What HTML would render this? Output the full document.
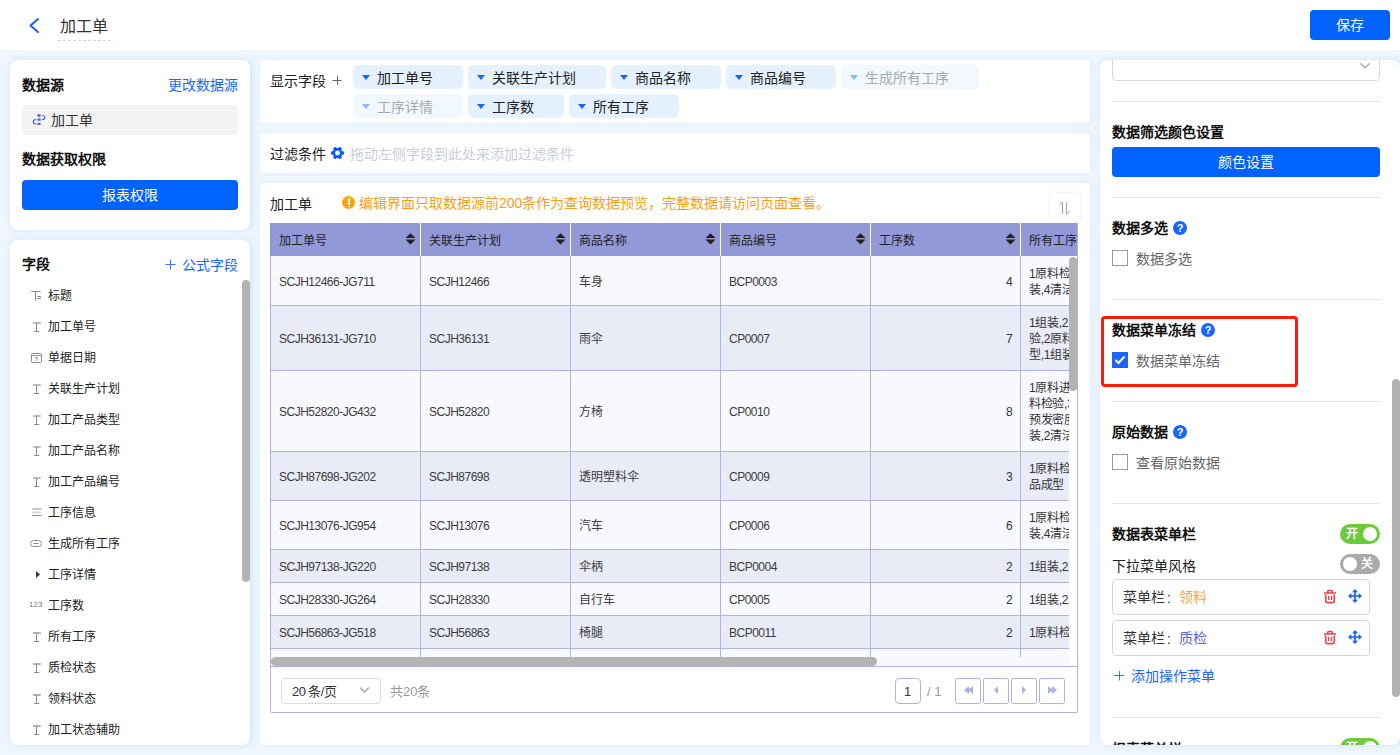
<!DOCTYPE html>
<html lang="zh-CN"><head><meta charset="utf-8">
<style>
*{box-sizing:border-box;margin:0;padding:0}
html,body{width:1400px;height:755px;overflow:hidden}
body{font-family:"Liberation Sans",sans-serif;background:#eff6fe;color:#333;position:relative;font-size:14px}
.abs{position:absolute}
.hdr{position:absolute;left:0;top:0;width:1400px;height:50px;background:#fff}
.card{position:absolute;background:#fff;border-radius:8px;box-shadow:1.5px 0 7px rgba(20,140,255,.15)}
.card.m{border-radius:4px;box-shadow:1px 0 6px rgba(20,140,255,.09)}
.t{position:absolute;white-space:nowrap;line-height:1}
.b{font-weight:bold;color:#111;margin-top:-1px}
.blue{color:#1a66ff}
.btn{position:absolute;background:#0062ff;color:#fff;border-radius:4px;text-align:center;font-size:14px}
.chip{position:absolute;height:24px;border-radius:5px;background:#e5f1fe;font-size:14px;color:#222}
.chip i{position:absolute;left:9px;top:10px;width:0;height:0;border-left:4.5px solid transparent;border-right:4.5px solid transparent;border-top:5px solid #1763ff}
.chip span{position:absolute;left:24px;top:6px;line-height:1}
.chip.dis{background:#f1f8fe;color:#a9a9a9}
.chip.dis i{border-top-color:#8cb6fa}
.fi{position:absolute;left:0;height:14px;width:200px}
.fi span{position:absolute;left:38px;top:1px;font-size:12px;line-height:1;color:#222}
.fi svg{position:absolute}
.dv{position:absolute;left:12px;width:268px;height:1px;background:#e6e6e6}
.cb{position:absolute;left:12px;width:16px;height:16px;border:1px solid #9397b4;border-radius:0;background:#fff}
.cb.on{background:#1f63ff;border-color:#1f63ff}
.help{position:absolute;width:14px;height:14px;border-radius:50%;background:#1667ff;color:#fff;font-size:11px;font-weight:bold;text-align:center;line-height:14px}
.gray{color:#666}
</style></head><body>
<!-- header -->
<div class="hdr">
  <svg class="abs" style="left:27px;top:16px" width="15" height="19" viewBox="0 0 15 19"><path d="M11 3 L3.5 9.5 L11 16" fill="none" stroke="#1b5cff" stroke-width="2" stroke-linecap="round" stroke-linejoin="round"/></svg>
  <div class="t" style="left:60px;top:19px;font-size:16px;color:#333">加工单</div>
  <div class="abs" style="left:58px;top:40px;width:56px;height:1px;background-image:linear-gradient(90deg,#d4d4d4 3px,transparent 3px);background-size:5px 1px"></div>
  <div class="btn" style="left:1310px;top:10px;width:80px;height:30px;line-height:30px">保存</div>
</div>

<!-- left cards -->
<div class="card" style="left:10px;top:60px;width:240px;height:170px">
  <div class="t b" style="left:12px;top:19px;font-size:14px">数据源</div>
  <div class="t blue" style="left:158px;top:18px;font-size:14px">更改数据源</div>
  <div class="abs" style="left:12px;top:45px;width:216px;height:30px;background:#f4f4f5;border-radius:3px"></div>
  <svg class="abs" style="left:22px;top:53px" width="14" height="14" viewBox="0 0 14 14"><g fill="none" stroke="#4f5ff2" stroke-width="1.2" stroke-linecap="round"><path d="M5.4 2.5H8.6M5.4 6.6H8.6M5.4 10.9H8.6" stroke-width="2.3" stroke-linecap="butt"/><path d="M10.3 2.5Q12.8 2.5 12.8 4.55Q12.8 6.6 10.3 6.6"/><path d="M3.7 6.6Q1.2 6.6 1.2 8.75Q1.2 10.9 3.7 10.9"/></g></svg>
  <div class="t" style="left:41px;top:53px;font-size:14px;color:#333">加工单</div>
  <div class="t b" style="left:12px;top:93px;font-size:14px">数据获取权限</div>
  <div class="btn" style="left:12px;top:120px;width:216px;height:30px;line-height:30px">报表权限</div>
</div>
<div class="card" style="left:10px;top:240px;width:240px;height:505px;overflow:hidden">
  <div class="t b" style="left:12px;top:18px;font-size:14px">字段</div>
  <svg class="abs" style="left:155px;top:19px" width="11" height="11" viewBox="0 0 11 11"><path d="M5.5 0.5V10.5M0.5 5.5H10.5" stroke="#3a74ff" stroke-width="1.1" fill="none"/></svg><div class="t blue" style="left:172px;top:18px;font-size:14px">公式字段</div>
  <div class="fi" style="top:49px"><svg style="left:21px;top:1px" width="12" height="12" viewBox="0 0 12 12"><path d="M0.2 1.5H9.7M4.5 1.5V10.7" stroke="#8a8a8a" stroke-width="1" fill="none"/><path d="M6.3 6.5H10M6.3 8.5H10" stroke="#777" stroke-width="0.9" fill="none"/></svg><span>标题</span></div>
<div class="fi" style="top:80px"><svg style="left:23px;top:1px" width="9" height="12" viewBox="0 0 9 12"><path d="M0 2H7.8" stroke="#9a9a9a" stroke-width="1.3" fill="none"/><path d="M3.5 2V10.5M1 10.5H6.2" stroke="#8a8a8a" stroke-width="1" fill="none"/></svg><span>加工单号</span></div>
<div class="fi" style="top:111px"><svg style="left:21px;top:1px" width="12" height="11" viewBox="0 0 12 11"><rect x="0.5" y="1.5" width="10" height="9" rx="1" stroke="#8a8a8a" fill="none"/><path d="M0.5 3.5H10.5M4 5.5H6.5L5 9" stroke="#8a8a8a" stroke-width="0.9" fill="none"/></svg><span>单据日期</span></div>
<div class="fi" style="top:142px"><svg style="left:23px;top:1px" width="9" height="12" viewBox="0 0 9 12"><path d="M0 2H7.8" stroke="#9a9a9a" stroke-width="1.3" fill="none"/><path d="M3.5 2V10.5M1 10.5H6.2" stroke="#8a8a8a" stroke-width="1" fill="none"/></svg><span>关联生产计划</span></div>
<div class="fi" style="top:173px"><svg style="left:23px;top:1px" width="9" height="12" viewBox="0 0 9 12"><path d="M0 2H7.8" stroke="#9a9a9a" stroke-width="1.3" fill="none"/><path d="M3.5 2V10.5M1 10.5H6.2" stroke="#8a8a8a" stroke-width="1" fill="none"/></svg><span>加工产品类型</span></div>
<div class="fi" style="top:204px"><svg style="left:23px;top:1px" width="9" height="12" viewBox="0 0 9 12"><path d="M0 2H7.8" stroke="#9a9a9a" stroke-width="1.3" fill="none"/><path d="M3.5 2V10.5M1 10.5H6.2" stroke="#8a8a8a" stroke-width="1" fill="none"/></svg><span>加工产品名称</span></div>
<div class="fi" style="top:235px"><svg style="left:23px;top:1px" width="9" height="12" viewBox="0 0 9 12"><path d="M0 2H7.8" stroke="#9a9a9a" stroke-width="1.3" fill="none"/><path d="M3.5 2V10.5M1 10.5H6.2" stroke="#8a8a8a" stroke-width="1" fill="none"/></svg><span>加工产品编号</span></div>
<div class="fi" style="top:266px"><svg style="left:21px;top:1px" width="12" height="11" viewBox="0 0 12 11"><path d="M1.5 2H10.5M1.5 8.5H10.5" stroke="#8a8a8a" stroke-width="1" fill="none"/><path d="M1.5 5.2H10.5" stroke="#999" stroke-width="0.9" stroke-dasharray="2 1" fill="none"/></svg><span>工序信息</span></div>
<div class="fi" style="top:297px"><svg style="left:20px;top:1px" width="13" height="11" viewBox="0 0 13 11"><rect x="0.5" y="2.5" width="11" height="6" rx="3" stroke="#8a8a8a" fill="none"/><path d="M3.5 5.5H8.5" stroke="#8a8a8a" fill="none"/></svg><span>生成所有工序</span></div>
<div class="fi" style="top:328px"><svg style="left:24px;top:1px" width="8" height="11" viewBox="0 0 8 11"><path d="M2 2L6 5.5L2 9Z" fill="#333"/></svg><span>工序详情</span></div>
<div class="fi" style="top:359px"><div style="position:absolute;left:19px;top:2px;font-size:8px;line-height:1;color:#777;letter-spacing:0">123</div><span>工序数</span></div>
<div class="fi" style="top:390px"><svg style="left:23px;top:1px" width="9" height="12" viewBox="0 0 9 12"><path d="M0 2H7.8" stroke="#9a9a9a" stroke-width="1.3" fill="none"/><path d="M3.5 2V10.5M1 10.5H6.2" stroke="#8a8a8a" stroke-width="1" fill="none"/></svg><span>所有工序</span></div>
<div class="fi" style="top:421px"><svg style="left:23px;top:1px" width="9" height="12" viewBox="0 0 9 12"><path d="M0 2H7.8" stroke="#9a9a9a" stroke-width="1.3" fill="none"/><path d="M3.5 2V10.5M1 10.5H6.2" stroke="#8a8a8a" stroke-width="1" fill="none"/></svg><span>质检状态</span></div>
<div class="fi" style="top:452px"><svg style="left:23px;top:1px" width="9" height="12" viewBox="0 0 9 12"><path d="M0 2H7.8" stroke="#9a9a9a" stroke-width="1.3" fill="none"/><path d="M3.5 2V10.5M1 10.5H6.2" stroke="#8a8a8a" stroke-width="1" fill="none"/></svg><span>领料状态</span></div>
<div class="fi" style="top:483px"><svg style="left:23px;top:1px" width="9" height="12" viewBox="0 0 9 12"><path d="M0 2H7.8" stroke="#9a9a9a" stroke-width="1.3" fill="none"/><path d="M3.5 2V10.5M1 10.5H6.2" stroke="#8a8a8a" stroke-width="1" fill="none"/></svg><span>加工状态辅助</span></div>
  <div class="abs" style="left:232px;top:40px;width:8px;height:302px;background:#b3b3b3;border-radius:4px"></div>
</div>
<div class="card m" style="left:260px;top:60px;width:830px;height:63px"></div>
<div class="t" style="left:270px;top:74px;font-size:14px;color:#222">显示字段</div>
<svg class="abs" style="left:332px;top:76px" width="10" height="10" viewBox="0 0 10 10"><path d="M5.5 0V9M0.5 4.5H9.5" stroke="#666" stroke-width="1" fill="none"/></svg>
<div class="chip" style="left:353px;top:65px;width:110px"><i></i><span>加工单号</span></div>
<div class="chip" style="left:468px;top:65px;width:138px"><i></i><span>关联生产计划</span></div>
<div class="chip" style="left:611px;top:65px;width:110px"><i></i><span>商品名称</span></div>
<div class="chip" style="left:726px;top:65px;width:110px"><i></i><span>商品编号</span></div>
<div class="chip dis" style="left:841px;top:65px;width:138px"><i></i><span>生成所有工序</span></div>
<div class="chip dis" style="left:353px;top:94px;width:110px"><i></i><span>工序详情</span></div>
<div class="chip" style="left:468px;top:94px;width:96px"><i></i><span>工序数</span></div>
<div class="chip" style="left:569px;top:94px;width:110px"><i></i><span>所有工序</span></div>
<div class="card m" style="left:260px;top:133px;width:830px;height:40px"></div>
<div class="t" style="left:270px;top:147px;font-size:14px;color:#222">过滤条件</div>
<svg class="abs" style="left:331px;top:147px" width="13" height="12" viewBox="0 0 13 12"><path fill="#0b5cff" fill-rule="evenodd" d="M11.20 4.29 L12.93 4.52 L12.93 7.48 L11.20 7.71 L10.33 9.21 L11.00 10.83 L8.43 12.31 L7.37 10.92 L5.63 10.92 L4.57 12.31 L2.00 10.83 L2.67 9.21 L1.80 7.71 L0.07 7.48 L0.07 4.52 L1.80 4.29 L2.67 2.79 L2.00 1.17 L4.57 -0.31 L5.63 1.08 L7.37 1.08 L8.43 -0.31 L11.00 1.17 L10.33 2.79Z M8.90 6 A2.4 2.4 0 1 0 4.10 6 A2.4 2.4 0 1 0 8.90 6Z"/></svg>
<div class="t" style="left:350px;top:147px;font-size:14px;color:#c8cedb">拖动左侧字段到此处来添加过滤条件</div>
<div class="card m" style="left:260px;top:183px;width:830px;height:562px"></div>
<div class="t" style="left:270px;top:197px;font-size:14px;color:#222">加工单</div>
<div class="abs" style="left:342px;top:196px;width:13px;height:13px;border-radius:50%;background:#f9a30e"><div style="position:absolute;left:5.5px;top:2px;width:2px;height:6.5px;background:#fff;border-radius:1px 1px 0.5px 0.5px"></div><div style="position:absolute;left:5.5px;top:9.5px;width:2px;height:1.6px;background:#fff"></div></div>
<div class="t" style="left:359px;top:196px;font-size:14px;color:#f6a01a">编辑界面只取数据源前200条作为查询数据预览，完整数据请访问页面查看。</div>
<div class="abs" style="left:1050px;top:193px;width:30px;height:29px;background:#fff;box-shadow:0 0 4px rgba(0,0,0,.08)"></div>
<svg class="abs" style="left:1057px;top:200px" width="16" height="16" viewBox="0 0 16 16"><path d="M2.5 4.8 L5.5 2 V14 M9.5 2 V14.3 L13 10.8" stroke="#a3a3a3" stroke-width="1" fill="none"/></svg>
<div class="abs" style="left:270px;top:223px;width:808px;height:490px;border:1px solid #aeb3e3;border-top:none;background:#fff;border-radius:0 0 2px 2px"></div>
<div class="abs" style="left:270px;top:223px;width:807px;height:33px;overflow:hidden">
<div class="abs" style="left:0;top:0;width:900px;height:33px;background:#9399d6"></div>
<div class="t" style="left:9px;top:12px;font-size:12px;color:#222">加工单号</div>
<svg class="abs" style="left:134.5px;top:10px" width="11" height="12" viewBox="0 0 11 12"><path d="M5.5 0.3L10.5 5.1H0.5Z M0.5 6.6H10.5L5.5 11.4Z" fill="#222"/></svg>
<div class="t" style="left:159px;top:12px;font-size:12px;color:#222">关联生产计划</div>
<div class="abs" style="left:150px;top:0;width:1px;height:33px;background:#fff"></div>
<svg class="abs" style="left:284.5px;top:10px" width="11" height="12" viewBox="0 0 11 12"><path d="M5.5 0.3L10.5 5.1H0.5Z M0.5 6.6H10.5L5.5 11.4Z" fill="#222"/></svg>
<div class="t" style="left:309px;top:12px;font-size:12px;color:#222">商品名称</div>
<div class="abs" style="left:300px;top:0;width:1px;height:33px;background:#fff"></div>
<svg class="abs" style="left:434.5px;top:10px" width="11" height="12" viewBox="0 0 11 12"><path d="M5.5 0.3L10.5 5.1H0.5Z M0.5 6.6H10.5L5.5 11.4Z" fill="#222"/></svg>
<div class="t" style="left:459px;top:12px;font-size:12px;color:#222">商品编号</div>
<div class="abs" style="left:450px;top:0;width:1px;height:33px;background:#fff"></div>
<svg class="abs" style="left:584.5px;top:10px" width="11" height="12" viewBox="0 0 11 12"><path d="M5.5 0.3L10.5 5.1H0.5Z M0.5 6.6H10.5L5.5 11.4Z" fill="#222"/></svg>
<div class="t" style="left:609px;top:12px;font-size:12px;color:#222">工序数</div>
<div class="abs" style="left:600px;top:0;width:1px;height:33px;background:#fff"></div>
<svg class="abs" style="left:734.5px;top:10px" width="11" height="12" viewBox="0 0 11 12"><path d="M5.5 0.3L10.5 5.1H0.5Z M0.5 6.6H10.5L5.5 11.4Z" fill="#222"/></svg>
<div class="t" style="left:759px;top:12px;font-size:12px;color:#222">所有工序</div>
<div class="abs" style="left:750px;top:0;width:1px;height:33px;background:#fff"></div>
</div>
<div class="abs" style="left:270px;top:223px;width:799px;height:434px;overflow:hidden">
<div class="abs" style="left:0;top:33px;width:900px;height:50px;background:#f8f9fe;border-bottom:1px solid #aeb3e3"></div>
<div class="abs" style="left:0px;top:33px;width:1px;height:50px;background:#aeb3e3"></div>
<div class="abs" style="left:150px;top:33px;width:1px;height:50px;background:#aeb3e3"></div>
<div class="abs" style="left:300px;top:33px;width:1px;height:50px;background:#aeb3e3"></div>
<div class="abs" style="left:450px;top:33px;width:1px;height:50px;background:#aeb3e3"></div>
<div class="abs" style="left:600px;top:33px;width:1px;height:50px;background:#aeb3e3"></div>
<div class="abs" style="left:750px;top:33px;width:1px;height:50px;background:#aeb3e3"></div>
<div class="t" style="left:9px;top:53.0px;font-size:12px;color:#3c3c3c;letter-spacing:-0.5px;">SCJH12466-JG711</div>
<div class="t" style="left:159px;top:53.0px;font-size:12px;color:#3c3c3c;letter-spacing:-0.5px;">SCJH12466</div>
<div class="t" style="left:309px;top:53.0px;font-size:12px;color:#3c3c3c;">车身</div>
<div class="t" style="left:459px;top:53.0px;font-size:12px;color:#3c3c3c;letter-spacing:-0.5px;">BCP0003</div>
<div class="t" style="left:736px;top:53.0px;font-size:12px;color:#333">4</div>
<div class="t" style="left:759px;top:45px;font-size:12px;color:#333;letter-spacing:-0.3px">1原料检验,2</div>
<div class="t" style="left:759px;top:61px;font-size:12px;color:#333;letter-spacing:-0.3px">装,4清洁</div>
<div class="abs" style="left:0;top:83px;width:900px;height:65px;background:#e9ebf7;border-bottom:1px solid #aeb3e3"></div>
<div class="abs" style="left:0px;top:83px;width:1px;height:65px;background:#aeb3e3"></div>
<div class="abs" style="left:150px;top:83px;width:1px;height:65px;background:#aeb3e3"></div>
<div class="abs" style="left:300px;top:83px;width:1px;height:65px;background:#aeb3e3"></div>
<div class="abs" style="left:450px;top:83px;width:1px;height:65px;background:#aeb3e3"></div>
<div class="abs" style="left:600px;top:83px;width:1px;height:65px;background:#aeb3e3"></div>
<div class="abs" style="left:750px;top:83px;width:1px;height:65px;background:#aeb3e3"></div>
<div class="t" style="left:9px;top:110.0px;font-size:12px;color:#3c3c3c;letter-spacing:-0.5px;">SCJH36131-JG710</div>
<div class="t" style="left:159px;top:110.0px;font-size:12px;color:#3c3c3c;letter-spacing:-0.5px;">SCJH36131</div>
<div class="t" style="left:309px;top:110.0px;font-size:12px;color:#3c3c3c;">雨伞</div>
<div class="t" style="left:459px;top:110.0px;font-size:12px;color:#3c3c3c;letter-spacing:-0.5px;">CP0007</div>
<div class="t" style="left:736px;top:110.0px;font-size:12px;color:#333">7</div>
<div class="t" style="left:759px;top:94px;font-size:12px;color:#333;letter-spacing:-0.3px">1组装,2</div>
<div class="t" style="left:759px;top:110px;font-size:12px;color:#333;letter-spacing:-0.3px">验,2原料</div>
<div class="t" style="left:759px;top:126px;font-size:12px;color:#333;letter-spacing:-0.3px">型,1组装</div>
<div class="abs" style="left:0;top:148px;width:900px;height:81px;background:#f8f9fe;border-bottom:1px solid #aeb3e3"></div>
<div class="abs" style="left:0px;top:148px;width:1px;height:81px;background:#aeb3e3"></div>
<div class="abs" style="left:150px;top:148px;width:1px;height:81px;background:#aeb3e3"></div>
<div class="abs" style="left:300px;top:148px;width:1px;height:81px;background:#aeb3e3"></div>
<div class="abs" style="left:450px;top:148px;width:1px;height:81px;background:#aeb3e3"></div>
<div class="abs" style="left:600px;top:148px;width:1px;height:81px;background:#aeb3e3"></div>
<div class="abs" style="left:750px;top:148px;width:1px;height:81px;background:#aeb3e3"></div>
<div class="t" style="left:9px;top:183.0px;font-size:12px;color:#3c3c3c;letter-spacing:-0.5px;">SCJH52820-JG432</div>
<div class="t" style="left:159px;top:183.0px;font-size:12px;color:#3c3c3c;letter-spacing:-0.5px;">SCJH52820</div>
<div class="t" style="left:309px;top:183.0px;font-size:12px;color:#3c3c3c;">方椅</div>
<div class="t" style="left:459px;top:183.0px;font-size:12px;color:#3c3c3c;letter-spacing:-0.5px;">CP0010</div>
<div class="t" style="left:736px;top:183.0px;font-size:12px;color:#333">8</div>
<div class="t" style="left:759px;top:159px;font-size:12px;color:#333;letter-spacing:-0.3px">1原料进</div>
<div class="t" style="left:759px;top:175px;font-size:12px;color:#333;letter-spacing:-0.3px">料检验,3</div>
<div class="t" style="left:759px;top:191px;font-size:12px;color:#333;letter-spacing:-0.3px">预发密度</div>
<div class="t" style="left:759px;top:207px;font-size:12px;color:#333;letter-spacing:-0.3px">装,2清洁</div>
<div class="abs" style="left:0;top:229px;width:900px;height:49px;background:#e9ebf7;border-bottom:1px solid #aeb3e3"></div>
<div class="abs" style="left:0px;top:229px;width:1px;height:49px;background:#aeb3e3"></div>
<div class="abs" style="left:150px;top:229px;width:1px;height:49px;background:#aeb3e3"></div>
<div class="abs" style="left:300px;top:229px;width:1px;height:49px;background:#aeb3e3"></div>
<div class="abs" style="left:450px;top:229px;width:1px;height:49px;background:#aeb3e3"></div>
<div class="abs" style="left:600px;top:229px;width:1px;height:49px;background:#aeb3e3"></div>
<div class="abs" style="left:750px;top:229px;width:1px;height:49px;background:#aeb3e3"></div>
<div class="t" style="left:9px;top:248.0px;font-size:12px;color:#3c3c3c;letter-spacing:-0.5px;">SCJH87698-JG202</div>
<div class="t" style="left:159px;top:248.0px;font-size:12px;color:#3c3c3c;letter-spacing:-0.5px;">SCJH87698</div>
<div class="t" style="left:309px;top:248.0px;font-size:12px;color:#3c3c3c;">透明塑料伞</div>
<div class="t" style="left:459px;top:248.0px;font-size:12px;color:#3c3c3c;letter-spacing:-0.5px;">CP0009</div>
<div class="t" style="left:736px;top:248.0px;font-size:12px;color:#333">3</div>
<div class="t" style="left:759px;top:240px;font-size:12px;color:#333;letter-spacing:-0.3px">1原料检验</div>
<div class="t" style="left:759px;top:256px;font-size:12px;color:#333;letter-spacing:-0.3px">品成型</div>
<div class="abs" style="left:0;top:278px;width:900px;height:49px;background:#f8f9fe;border-bottom:1px solid #aeb3e3"></div>
<div class="abs" style="left:0px;top:278px;width:1px;height:49px;background:#aeb3e3"></div>
<div class="abs" style="left:150px;top:278px;width:1px;height:49px;background:#aeb3e3"></div>
<div class="abs" style="left:300px;top:278px;width:1px;height:49px;background:#aeb3e3"></div>
<div class="abs" style="left:450px;top:278px;width:1px;height:49px;background:#aeb3e3"></div>
<div class="abs" style="left:600px;top:278px;width:1px;height:49px;background:#aeb3e3"></div>
<div class="abs" style="left:750px;top:278px;width:1px;height:49px;background:#aeb3e3"></div>
<div class="t" style="left:9px;top:297.0px;font-size:12px;color:#3c3c3c;letter-spacing:-0.5px;">SCJH13076-JG954</div>
<div class="t" style="left:159px;top:297.0px;font-size:12px;color:#3c3c3c;letter-spacing:-0.5px;">SCJH13076</div>
<div class="t" style="left:309px;top:297.0px;font-size:12px;color:#3c3c3c;">汽车</div>
<div class="t" style="left:459px;top:297.0px;font-size:12px;color:#3c3c3c;letter-spacing:-0.5px;">CP0006</div>
<div class="t" style="left:736px;top:297.0px;font-size:12px;color:#333">6</div>
<div class="t" style="left:759px;top:289px;font-size:12px;color:#333;letter-spacing:-0.3px">1原料检验</div>
<div class="t" style="left:759px;top:305px;font-size:12px;color:#333;letter-spacing:-0.3px">装,4清洁</div>
<div class="abs" style="left:0;top:327px;width:900px;height:33px;background:#e9ebf7;border-bottom:1px solid #aeb3e3"></div>
<div class="abs" style="left:0px;top:327px;width:1px;height:33px;background:#aeb3e3"></div>
<div class="abs" style="left:150px;top:327px;width:1px;height:33px;background:#aeb3e3"></div>
<div class="abs" style="left:300px;top:327px;width:1px;height:33px;background:#aeb3e3"></div>
<div class="abs" style="left:450px;top:327px;width:1px;height:33px;background:#aeb3e3"></div>
<div class="abs" style="left:600px;top:327px;width:1px;height:33px;background:#aeb3e3"></div>
<div class="abs" style="left:750px;top:327px;width:1px;height:33px;background:#aeb3e3"></div>
<div class="t" style="left:9px;top:338.0px;font-size:12px;color:#3c3c3c;letter-spacing:-0.5px;">SCJH97138-JG220</div>
<div class="t" style="left:159px;top:338.0px;font-size:12px;color:#3c3c3c;letter-spacing:-0.5px;">SCJH97138</div>
<div class="t" style="left:309px;top:338.0px;font-size:12px;color:#3c3c3c;">伞柄</div>
<div class="t" style="left:459px;top:338.0px;font-size:12px;color:#3c3c3c;letter-spacing:-0.5px;">BCP0004</div>
<div class="t" style="left:736px;top:338.0px;font-size:12px;color:#333">2</div>
<div class="t" style="left:759px;top:338px;font-size:12px;color:#333;letter-spacing:-0.3px">1组装,2原</div>
<div class="abs" style="left:0;top:360px;width:900px;height:33px;background:#f8f9fe;border-bottom:1px solid #aeb3e3"></div>
<div class="abs" style="left:0px;top:360px;width:1px;height:33px;background:#aeb3e3"></div>
<div class="abs" style="left:150px;top:360px;width:1px;height:33px;background:#aeb3e3"></div>
<div class="abs" style="left:300px;top:360px;width:1px;height:33px;background:#aeb3e3"></div>
<div class="abs" style="left:450px;top:360px;width:1px;height:33px;background:#aeb3e3"></div>
<div class="abs" style="left:600px;top:360px;width:1px;height:33px;background:#aeb3e3"></div>
<div class="abs" style="left:750px;top:360px;width:1px;height:33px;background:#aeb3e3"></div>
<div class="t" style="left:9px;top:371.0px;font-size:12px;color:#3c3c3c;letter-spacing:-0.5px;">SCJH28330-JG264</div>
<div class="t" style="left:159px;top:371.0px;font-size:12px;color:#3c3c3c;letter-spacing:-0.5px;">SCJH28330</div>
<div class="t" style="left:309px;top:371.0px;font-size:12px;color:#3c3c3c;">自行车</div>
<div class="t" style="left:459px;top:371.0px;font-size:12px;color:#3c3c3c;letter-spacing:-0.5px;">CP0005</div>
<div class="t" style="left:736px;top:371.0px;font-size:12px;color:#333">2</div>
<div class="t" style="left:759px;top:371px;font-size:12px;color:#333;letter-spacing:-0.3px">1组装,2原</div>
<div class="abs" style="left:0;top:393px;width:900px;height:33px;background:#e9ebf7;border-bottom:1px solid #aeb3e3"></div>
<div class="abs" style="left:0px;top:393px;width:1px;height:33px;background:#aeb3e3"></div>
<div class="abs" style="left:150px;top:393px;width:1px;height:33px;background:#aeb3e3"></div>
<div class="abs" style="left:300px;top:393px;width:1px;height:33px;background:#aeb3e3"></div>
<div class="abs" style="left:450px;top:393px;width:1px;height:33px;background:#aeb3e3"></div>
<div class="abs" style="left:600px;top:393px;width:1px;height:33px;background:#aeb3e3"></div>
<div class="abs" style="left:750px;top:393px;width:1px;height:33px;background:#aeb3e3"></div>
<div class="t" style="left:9px;top:404.0px;font-size:12px;color:#3c3c3c;letter-spacing:-0.5px;">SCJH56863-JG518</div>
<div class="t" style="left:159px;top:404.0px;font-size:12px;color:#3c3c3c;letter-spacing:-0.5px;">SCJH56863</div>
<div class="t" style="left:309px;top:404.0px;font-size:12px;color:#3c3c3c;">椅腿</div>
<div class="t" style="left:459px;top:404.0px;font-size:12px;color:#3c3c3c;letter-spacing:-0.5px;">BCP0011</div>
<div class="t" style="left:736px;top:404.0px;font-size:12px;color:#333">2</div>
<div class="t" style="left:759px;top:404px;font-size:12px;color:#333;letter-spacing:-0.3px">1原料检验</div>
<div class="abs" style="left:0;top:426px;width:900px;height:33px;background:#f8f9fe;border-bottom:1px solid #aeb3e3"></div>
<div class="abs" style="left:0px;top:426px;width:1px;height:33px;background:#aeb3e3"></div>
<div class="abs" style="left:150px;top:426px;width:1px;height:33px;background:#aeb3e3"></div>
<div class="abs" style="left:300px;top:426px;width:1px;height:33px;background:#aeb3e3"></div>
<div class="abs" style="left:450px;top:426px;width:1px;height:33px;background:#aeb3e3"></div>
<div class="abs" style="left:600px;top:426px;width:1px;height:33px;background:#aeb3e3"></div>
<div class="abs" style="left:750px;top:426px;width:1px;height:33px;background:#aeb3e3"></div>
<div class="t" style="left:9px;top:437.0px;font-size:12px;color:#3c3c3c;letter-spacing:-0.5px;">SCJH00000-JG000</div>
<div class="t" style="left:159px;top:437.0px;font-size:12px;color:#3c3c3c;letter-spacing:-0.5px;">SCJH00000</div>
<div class="t" style="left:309px;top:437.0px;font-size:12px;color:#3c3c3c;">椅子</div>
<div class="t" style="left:459px;top:437.0px;font-size:12px;color:#3c3c3c;letter-spacing:-0.5px;">CP0001</div>
<div class="t" style="left:736px;top:437.0px;font-size:12px;color:#333">2</div>
<div class="t" style="left:759px;top:437px;font-size:12px;color:#333;letter-spacing:-0.3px">1原料检验</div>
</div>
<div class="abs" style="left:1069px;top:256px;width:8px;height:401px;background:#fff"></div>
<div class="abs" style="left:1069px;top:257px;width:8px;height:134px;background:#b3b3b3;border-radius:4px"></div>
<div class="abs" style="left:271px;top:657px;width:798px;height:9px;background:#f8f9fe"></div>
<div class="abs" style="left:271px;top:657px;width:606px;height:9px;background:#b3b3b3;border-radius:5px"></div>
<div class="abs" style="left:270px;top:666px;width:808px;height:1px;background:#aeb3e3"></div>
<div class="abs" style="left:281px;top:678px;width:100px;height:26px;border:1px solid #dcdcdc;border-radius:4px;background:#fff"></div>
<div class="t" style="left:292px;top:685px;font-size:13px;color:#333;letter-spacing:-0.6px">20 条/页</div>
<svg class="abs" style="left:359px;top:686px" width="11" height="8" viewBox="0 0 11 8"><path d="M1 1.5L5.5 6L10 1.5" stroke="#999" stroke-width="1.1" fill="none"/></svg>
<div class="t" style="left:390px;top:685px;font-size:13px;color:#999">共20条</div>
<div class="abs" style="left:895px;top:678px;width:26px;height:26px;border:1px solid #aeb3e3;border-radius:4px;background:#fff"></div>
<div class="t" style="left:904px;top:685px;font-size:13px;color:#333">1</div>
<div class="t" style="left:927px;top:685px;font-size:13px;color:#999">/ 1</div>
<div class="abs" style="left:955px;top:678px;width:26px;height:26px;border:1px solid #aeb3e3;border-radius:2.5px;background:#fff"></div>
<svg class="abs" style="left:962.5px;top:685px" width="11" height="10" viewBox="0 0 11 10"><path d="M6 1L1 5L6 9Z M10 1L5 5L10 9Z" fill="#aab0e2"/></svg>
<div class="abs" style="left:983px;top:678px;width:26px;height:26px;border:1px solid #aeb3e3;border-radius:2.5px;background:#fff"></div>
<svg class="abs" style="left:993.0px;top:685px" width="6" height="10" viewBox="0 0 6 10"><path d="M5 1L1 5L5 9Z" fill="#aab0e2"/></svg>
<div class="abs" style="left:1011px;top:678px;width:26px;height:26px;border:1px solid #aeb3e3;border-radius:2.5px;background:#fff"></div>
<svg class="abs" style="left:1021.0px;top:685px" width="6" height="10" viewBox="0 0 6 10"><path d="M1 1L5 5L1 9Z" fill="#aab0e2"/></svg>
<div class="abs" style="left:1039px;top:678px;width:26px;height:26px;border:1px solid #aeb3e3;border-radius:2.5px;background:#fff"></div>
<svg class="abs" style="left:1046.5px;top:685px" width="11" height="10" viewBox="0 0 11 10"><path d="M1 1L6 5L1 9Z M5 1L10 5L5 9Z" fill="#aab0e2"/></svg><div class="card" style="left:1100px;top:60px;width:300px;height:685px;overflow:hidden">
<div class="abs" style="left:12px;top:-20px;width:268px;height:40.5px;border:1px solid #d9d9d9;border-radius:4px"></div>
<svg class="abs" style="left:260px;top:2px" width="10" height="8" viewBox="0 0 10 8"><path d="M0.5 1.3L5 5.8L9.5 1.3" stroke="#8a8a8a" stroke-width="1.1" fill="none"/></svg>
<div class="dv" style="top:41px"></div>
<div class="t b" style="left:12px;top:66px;font-size:14px">数据筛选颜色设置</div>
<div class="btn" style="left:12px;top:87px;width:268px;height:30px;line-height:30px">颜色设置</div>
<div class="dv" style="top:137px"></div>
<div class="t b" style="left:12px;top:162px;font-size:14px">数据多选</div>
<div class="help" style="left:73px;top:161px">?</div>
<div class="cb" style="top:190px"></div>
<div class="t gray" style="left:36px;top:192px;font-size:14px">数据多选</div>
<div class="dv" style="top:239px"></div>
<div class="t b" style="left:12px;top:264px;font-size:14px">数据菜单冻结</div>
<div class="help" style="left:101px;top:263px">?</div>
<div class="cb on" style="top:292px"><svg style="position:absolute;left:1px;top:2px" width="12" height="10" viewBox="0 0 12 10"><path d="M1.5 5L4.5 8L10.5 1.5" stroke="#fff" stroke-width="2" fill="none"/></svg></div>
<div class="t gray" style="left:36px;top:294px;font-size:14px">数据菜单冻结</div>
<div class="abs" style="left:1px;top:256px;width:197px;height:71px;border:3px solid #ff1a0e;border-radius:4px"></div>
<div class="dv" style="top:341px"></div>
<div class="t b" style="left:12px;top:366px;font-size:14px">原始数据</div>
<div class="help" style="left:73px;top:365px">?</div>
<div class="cb" style="top:394px"></div>
<div class="t gray" style="left:36px;top:396px;font-size:14px">查看原始数据</div>
<div class="dv" style="top:443px"></div>
<div class="t b" style="left:12px;top:468px;font-size:14px">数据表菜单栏</div>
<div class="abs" style="left:240px;top:464px;width:40px;height:20px;border-radius:10px;background:#6acb3d"><div style="position:absolute;right:3px;top:3px;width:14px;height:14px;border-radius:50%;background:#fff"></div><div style="position:absolute;left:6px;top:4px;font-size:12px;line-height:1;color:#fff;font-weight:bold">开</div></div>
<div class="t" style="left:12px;top:499px;font-size:14px;color:#222">下拉菜单风格</div>
<div class="abs" style="left:240px;top:494px;width:40px;height:20px;border-radius:10px;background:#aaaaaa"><div style="position:absolute;left:3px;top:3px;width:14px;height:14px;border-radius:50%;background:#fff"></div><div style="position:absolute;left:21px;top:4px;font-size:12px;line-height:1;color:#fff;font-weight:bold">关</div></div>
<div class="abs" style="left:12px;top:519px;width:258px;height:36px;border:1px solid #d6d6d6;border-radius:4px"></div>
<div class="t" style="left:23px;top:530px;font-size:14px;color:#333">菜单栏</div>
<div class="t" style="left:67px;top:531px;font-size:14px;color:#333">:</div>
<div class="t" style="left:79px;top:530px;font-size:14px;color:#f6a33c">领料</div>
<svg class="abs" style="left:223px;top:529px" width="14" height="15" viewBox="0 0 14 15"><path d="M1 4H13M4.8 4V2.2Q4.8 1.5 5.5 1.5H8.5Q9.2 1.5 9.2 2.2V4" stroke="#e4464f" stroke-width="1.7" fill="none" stroke-linejoin="round"/><path d="M2.7 5.5V12Q2.7 13.6 4.3 13.6H9.7Q11.3 13.6 11.3 12V5.5" stroke="#e4464f" stroke-width="1.7" fill="none"/><path d="M5.6 6.8V11M8.4 6.8V11" stroke="#e4464f" stroke-width="1.4"/></svg>
<svg class="abs" style="left:248px;top:529px" width="14" height="14" viewBox="0 0 14 14"><path d="M7 2.5V11.5M2.5 7H11.5" stroke="#1a5ff0" stroke-width="1.7"/><path d="M7 0L10 3.3H4Z M7 14L10 10.7H4Z M0 7L3.3 4V10Z M14 7L10.7 4V10Z" fill="#1a5ff0"/></svg>
<div class="abs" style="left:12px;top:560px;width:258px;height:36px;border:1px solid #d6d6d6;border-radius:4px"></div>
<div class="t" style="left:23px;top:571px;font-size:14px;color:#333">菜单栏</div>
<div class="t" style="left:67px;top:572px;font-size:14px;color:#333">:</div>
<div class="t" style="left:79px;top:571px;font-size:14px;color:#5b67d8">质检</div>
<svg class="abs" style="left:223px;top:570px" width="14" height="15" viewBox="0 0 14 15"><path d="M1 4H13M4.8 4V2.2Q4.8 1.5 5.5 1.5H8.5Q9.2 1.5 9.2 2.2V4" stroke="#e4464f" stroke-width="1.7" fill="none" stroke-linejoin="round"/><path d="M2.7 5.5V12Q2.7 13.6 4.3 13.6H9.7Q11.3 13.6 11.3 12V5.5" stroke="#e4464f" stroke-width="1.7" fill="none"/><path d="M5.6 6.8V11M8.4 6.8V11" stroke="#e4464f" stroke-width="1.4"/></svg>
<svg class="abs" style="left:248px;top:570px" width="14" height="14" viewBox="0 0 14 14"><path d="M7 2.5V11.5M2.5 7H11.5" stroke="#1a5ff0" stroke-width="1.7"/><path d="M7 0L10 3.3H4Z M7 14L10 10.7H4Z M0 7L3.3 4V10Z M14 7L10.7 4V10Z" fill="#1a5ff0"/></svg>
<svg class="abs" style="left:14px;top:611px" width="10" height="10" viewBox="0 0 10 10"><path d="M5.5 0V9.5M0 4.5H10" stroke="#3a74ff" stroke-width="1" fill="none"/></svg>
<div class="t blue" style="left:31px;top:609px;font-size:14px">添加操作菜单</div>
<div class="dv" style="top:657px"></div>
<div class="t b" style="left:12px;top:683px;font-size:14px">报表菜单栏</div>
<div class="abs" style="left:240px;top:678px;width:40px;height:20px;border-radius:10px;background:#6acb3d"><div style="position:absolute;right:3px;top:3px;width:14px;height:14px;border-radius:50%;background:#fff"></div><div style="position:absolute;left:6px;top:4px;font-size:12px;line-height:1;color:#fff;font-weight:bold">开</div></div>
</div>
<div class="abs" style="left:1392px;top:379px;width:8px;height:318px;background:#b3b3b3;border-radius:4px"></div></body></html>
